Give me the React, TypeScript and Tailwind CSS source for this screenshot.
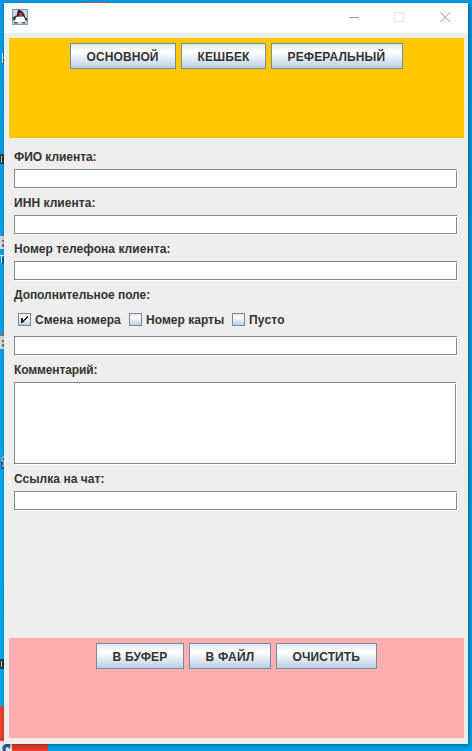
import type { ReactNode } from 'react';

function MetalButton({ label, className }: { label: string; className: string }) {
  return (
    <button
      className={`flex h-[26px] shrink-0 items-center justify-start border border-[#7a8a99] bg-[linear-gradient(to_bottom,#dde8f3_0%,#ffffff_30%,#ffffff_36%,#b8cfe5_100%)] pt-px pl-[15.5px] text-xs font-bold whitespace-nowrap ${className}`}
    >
      {label}
    </button>
  );
}

function Label({ children, className }: { children: ReactNode; className: string }) {
  return <div className={`h-4 text-xs leading-4 font-bold whitespace-nowrap ${className}`}>{children}</div>;
}

function Field({ className }: { className: string }) {
  return (
    <div
      className={`relative shrink-0 border border-[#7a8a99] bg-white shadow-[1px_1px_0_#ffffff] after:absolute after:-right-px after:top-0 after:h-px after:w-px after:bg-white ${className}`}
    />
  );
}

function Check({ label, checked, className }: { label: string; checked?: boolean; className: string }) {
  return (
    <label className={`flex h-4 shrink-0 items-start gap-1 text-xs leading-4 font-bold whitespace-nowrap ${className}`}>
      <span className="mt-px flex size-[13px] shrink-0 border border-[#7a8a99] bg-[linear-gradient(to_bottom,#dde8f3_0%,#ffffff_30%,#b8cfe5_100%)]">
        {checked && (
          <svg className="size-[11px]" viewBox="0 0 11 11" fill="#222222" shapeRendering="crispEdges">
            <path d="M2 4h2v5H2zM8 2h1v2H8zM7 3h1v2H7zM6 4h1v2H6zM5 5h1v2H5zM4 6h1v2H4z" />
          </svg>
        )}
      </span>
      <span>{label}</span>
    </label>
  );
}

function JavaIcon() {
  return (
    <svg className="size-4" viewBox="0 0 16 16">
      <rect width="16" height="16" fill="#8798ac" />
      <rect x="1" y="1" width="14" height="14" fill="#cbd8e5" />
      <path d="M6 1h2l3 2 2 4v2H4l1-4z" fill="#20242a" />
      <path d="M1 8l3-1.5L6 8l-2 3-3 .5zM11 7l4 2v3l-3-1z" fill="#3c454e" />
      <path d="M4.5 8l3-.5h4L13 10v3H3v-2z" fill="#ffffff" />
      <path d="M2 13h3l1 1.5H2zM10 13h3l1 1.5h-4z" fill="#4a5661" />
      <circle cx="8.6" cy="5.5" r="2" fill="#e52b38" />
    </svg>
  );
}

function Desktop() {
  return (
    <svg className="absolute inset-0" width="472" height="751" viewBox="0 0 472 751">
      <path d="M18 3q3-2 7 0M84 2h25v1H84z" fill="#a66a78" />
      <path d="M0 706h48v45H0z" fill="#ed3d32" />
      <path d="M0 741h12v10H0z" fill="#e2e5e8" />
      <path d="M3 751c-2-5 1-7 4-7l-2-1h5v6l-2-2c-2 0-3 2-2 4z" fill="#285da0" />
      <path d="M0 236h4v13H0zM0 336h4v13H0z" fill="#d6d6d6" />
      <path d="M2 240h2v2H2zM2 244h2v3H2zM2 340h2v2H2zM2 344h2v3H2zM1 332h3v4H1z" fill="#757575" />
      <path d="M0 154h4v10H0zM0 659h4v10H0z" fill="#16405d" />
      <path d="M1 156h1v7H1zM1 661h1v6H1z" fill="#e8a060" />
      <path d="M2 53h1v10H2zM2 57h2v1H2zM1 255h1v8H1zM0 255h4v1H0z" fill="#d6edf8" />
      <path d="M3 54h1v3H3zM3 58h1v6H3zM2 257h2v7H2zM1 456h3v13H1z" fill="#17658c" />
      <path d="M4 457H2v4h2v5H2" fill="none" stroke="#e4f1f5" />
    </svg>
  );
}

export default function App() {
  return (
    <div className="relative flex h-[751px] w-[472px] overflow-hidden bg-[linear-gradient(to_bottom,#0099e5,#00a8ef)] pt-[3px] pl-1 font-['Liberation_Sans',Arial,sans-serif] text-[#333333]">
      <Desktop />
      <main className="relative flex h-[741px] w-[464px] flex-col bg-[#eeeeee] shadow-[0_0_1px_rgba(0,0,0,0.35),2px_2px_5px_rgba(0,0,0,0.3)]">
        <header className="flex h-[30px] shrink-0 bg-white pt-[6px] pl-2">
          <JavaIcon />
          <svg className="ml-[320px]" width="104" height="16" viewBox="0 0 104 16" fill="none" stroke="#999999">
            <path d="M1 8.5h10" />
            <path d="M46.5 3.5h9v9h-9z" stroke="#e5e5e5" />
            <path d="M92.5 3.5l9.5 9.5M102 3.5l-9.5 9.5" />
          </svg>
        </header>
        <section className="mt-[5px] ml-[5px] flex h-[100px] w-[455px] shrink-0 gap-[5px] bg-[#ffc800] pt-[5px] pl-[61px]">
          <MetalButton label="ОСНОВНОЙ" className="w-[106px] tracking-[0.1px]" />
          <MetalButton label="КЕШБЕК" className="w-[85px] tracking-[0.1px]" />
          <MetalButton label="РЕФЕРАЛЬНЫЙ" className="w-[132px] tracking-[0.15px]" />
        </section>
        <section className="flex h-[500px] shrink-0 flex-col pt-[11px] pl-[10px]">
          <Label className="tracking-[-0.05px]">ФИО клиента:</Label>
          <Field className="mt-1 h-[19px] w-[443px]" />
          <Label className="mt-[7px] tracking-[0.05px]">ИНН клиента:</Label>
          <Field className="mt-1 h-[19px] w-[443px]" />
          <Label className="mt-[7px] tracking-[0.05px]">Номер телефона клиента:</Label>
          <Field className="mt-1 h-[19px] w-[443px]" />
          <Label className="mt-[7px] tracking-[-0.05px]">Дополнительное поле:</Label>
          <div className="mt-[9px] flex h-4 pl-1">
            <Check label="Смена номера" checked className="w-[111px] tracking-[0.02px]" />
            <Check label="Номер карты" className="w-[103px] tracking-[0.02px]" />
            <Check label="Пусто" className="tracking-[0.2px]" />
          </div>
          <Field className="mt-2 h-[19px] w-[443px]" />
          <Label className="mt-[7px] tracking-[-0.12px]">Комментарий:</Label>
          <Field className="mt-1 h-[82px] w-[442px]" />
          <Label className="mt-[7px] tracking-[0.05px]">Ссылка на чат:</Label>
          <Field className="mt-1 h-[19px] w-[443px]" />
        </section>
        <section className="ml-[5px] flex h-[100px] w-[455px] shrink-0 gap-[5px] bg-[#ffafaf] pt-[5px] pl-[87px]">
          <MetalButton label="В БУФЕР" className="w-[88px] tracking-[0.2px]" />
          <MetalButton label="В ФАЙЛ" className="w-[82px] tracking-[0.2px]" />
          <MetalButton label="ОЧИСТИТЬ" className="w-[101px] tracking-[0.1px]" />
        </section>
      </main>
    </div>
  );
}
